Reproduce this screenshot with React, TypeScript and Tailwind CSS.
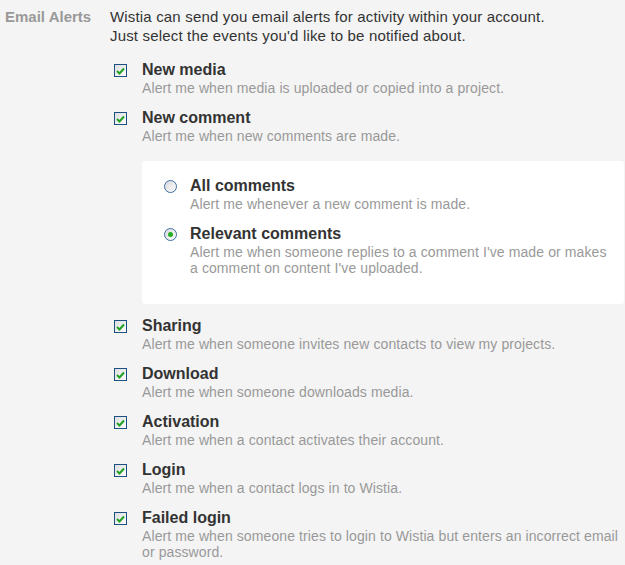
import React from 'react';

type Alert = { title: string; desc: string };

const topAlerts: Alert[] = [
  { title: 'New media', desc: 'Alert me when media is uploaded or copied into a project.' },
  { title: 'New comment', desc: 'Alert me when new comments are made.' },
];

const bottomAlerts: Alert[] = [
  { title: 'Sharing', desc: 'Alert me when someone invites new contacts to view my projects.' },
  { title: 'Download', desc: 'Alert me when someone downloads media.' },
  { title: 'Activation', desc: 'Alert me when a contact activates their account.' },
  { title: 'Login', desc: 'Alert me when a contact logs in to Wistia.' },
  { title: 'Failed login', desc: 'Alert me when someone tries to login to Wistia but enters an incorrect email or password.' },
];

const Checkbox = () => (
  <span className="mt-[4px] flex h-[13px] w-[13px] shrink-0 items-center justify-center border border-[#1c5080] bg-gradient-to-br from-[#dcdcdc] to-white">
    <svg width="9" height="8" viewBox="0 0 9 8">
      <path d="M1 4 L3.5 6.5 L8 1.5" fill="none" stroke="#21a121" strokeWidth="2" />
    </svg>
  </span>
);

const Radio = ({ checked }: { checked?: boolean }) => (
  <span className="mt-[4px] flex h-[13px] w-[13px] shrink-0 items-center justify-center rounded-full border border-[#3d6ea6] bg-gradient-to-br from-[#d8d8d8] to-white">
    {checked && <span className="h-[5px] w-[5px] rounded-full bg-[#22b022]" />}
  </span>
);

const Item = ({ alert, radio, checked }: { alert: Alert; radio?: boolean; checked?: boolean }) => (
  <div className="flex">
    <div className={radio ? 'w-[26px] shrink-0' : 'w-[32px] shrink-0 pl-[4px]'}>
      {radio ? <Radio checked={checked} /> : <Checkbox />}
    </div>
    <div>
      <div className="text-[16px] font-bold leading-[20px] text-[#333]">{alert.title}</div>
      <div className="text-[14px] leading-[16px] tracking-[0.1px] text-[#999]">{alert.desc}</div>
    </div>
  </div>
);

export default function App() {
  return (
    <div className="min-h-[565px] bg-[#f4f4f4] font-['Liberation_Sans',Arial,sans-serif]">
      <div className="flex pt-[7px]">
        <div className="w-[110px] shrink-0 pl-[5px] text-[15px] font-bold leading-[19px] text-[#999]">Email Alerts</div>
        <div className="flex-1">
          <p className="text-[15px] leading-[19px] tracking-[0.17px] text-[#333]">
            Wistia can send you email alerts for activity within your account.
            <br />
            Just select the events you'd like to be notified about.
          </p>
          <div className="mt-[15px] flex flex-col gap-[12px]">
            {topAlerts.map((a) => (
              <Item key={a.title} alert={a} />
            ))}
          </div>
          {/* comment options */}
          <div className="mb-[12px] ml-[32px] mr-[1px] mt-[17px] flex flex-col gap-[12px] rounded-[3px] bg-white pb-[28px] pl-[22px] pr-[16px] pt-[15px]">
            <Item radio alert={{ title: 'All comments', desc: 'Alert me whenever a new comment is made.' }} />
            <Item radio checked alert={{ title: 'Relevant comments', desc: "Alert me when someone replies to a comment I've made or makes a comment on content I've uploaded." }} />
          </div>
          <div className="flex flex-col gap-[12px] pr-[5px]">
            {bottomAlerts.map((a) => (
              <Item key={a.title} alert={a} />
            ))}
          </div>
        </div>
      </div>
    </div>
  );
}
